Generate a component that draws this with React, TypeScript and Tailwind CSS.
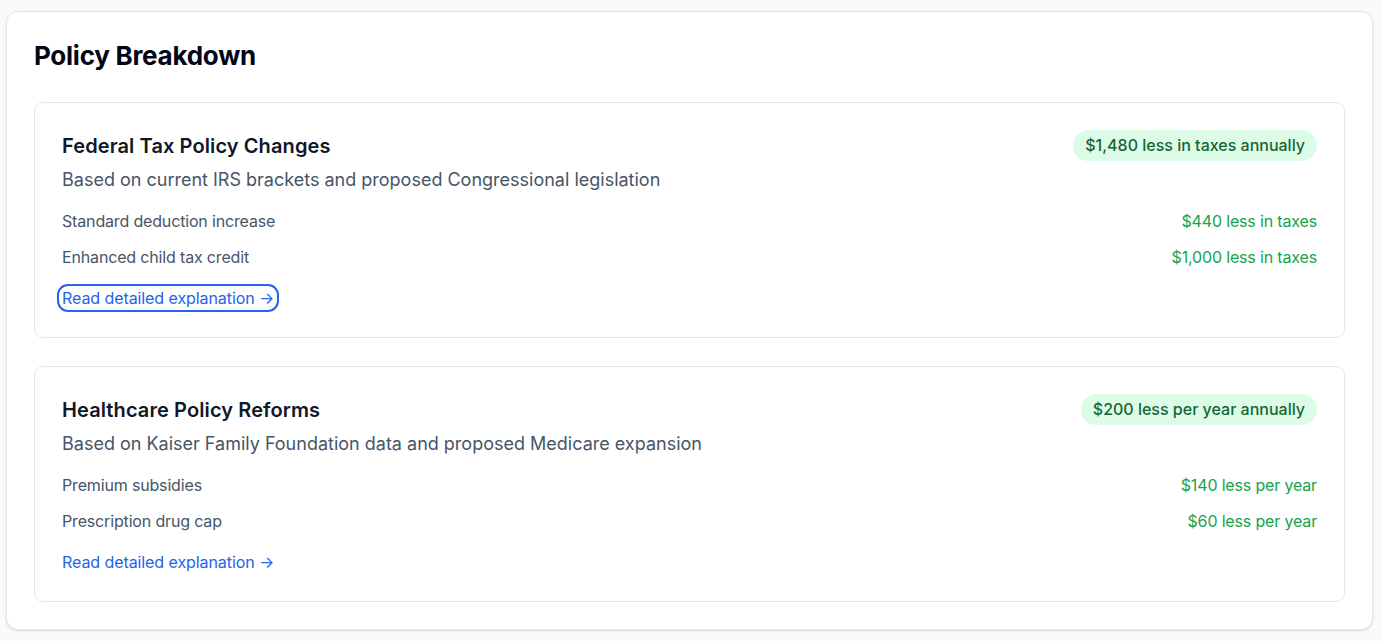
type Item = { label: string; value: string };

type Policy = {
  title: string;
  badge: string;
  source: string;
  items: Item[];
  focused?: boolean;
};

const policies: Policy[] = [
  {
    title: "Federal Tax Policy Changes",
    badge: "$1,480 less in taxes annually",
    source: "Based on current IRS brackets and proposed Congressional legislation",
    items: [
      { label: "Standard deduction increase", value: "$440 less in taxes" },
      { label: "Enhanced child tax credit", value: "$1,000 less in taxes" },
    ],
    focused: true,
  },
  {
    title: "Healthcare Policy Reforms",
    badge: "$200 less per year annually",
    source: "Based on Kaiser Family Foundation data and proposed Medicare expansion",
    items: [
      { label: "Premium subsidies", value: "$140 less per year" },
      { label: "Prescription drug cap", value: "$60 less per year" },
    ],
  },
];

const PolicyCard = ({ policy }: { policy: Policy }) => (
  <div className="rounded-[9px] border border-[#e2e8f0] bg-white p-[27px]">
    <div className="flex items-center justify-between">
      <h3 className="text-xl font-semibold leading-7 tracking-[0.005em] text-[#0f172a]">{policy.title}</h3>
      <span className="rounded-full bg-[#dcfce7] px-3 py-[4px] text-base leading-[23px] font-medium text-[#166534]">
        {policy.badge}
      </span>
    </div>
    <p className="mt-[5px] text-lg leading-7 text-[#475569]">{policy.source}</p>

    <div className="mt-[15px] flex flex-col gap-3">
      {policy.items.map((item) => (
        <div key={item.label} className="flex items-center justify-between text-base leading-6 tracking-[-0.01em]">
          <span className="text-[#475569]">{item.label}</span>
          <span className="text-[#16a34a]">{item.value}</span>
        </div>
      ))}
    </div>

    <div className="mt-[17px] flex">
      <a
        href="#"
        className={
          policy.focused
            ? "-mx-[3px] rounded-[9px] px-[3px] text-base leading-6 tracking-[-0.005em] text-[#2563eb] outline-2 outline-[#2563eb]"
            : "text-base leading-6 tracking-[-0.005em] text-[#2563eb]"
        }
      >
        Read detailed explanation →
      </a>
    </div>
  </div>
);

export default function App() {
  return (
    <div className="min-h-screen bg-[#f8fafc] pb-[11px] pl-[6px] pr-[10px] pt-[11px] font-['Inter',sans-serif]">
      <section className="rounded-xl border border-[#e2e8f0] bg-white px-[27px] pb-[27px] pt-[28px] shadow-sm">
        <h2 className="mb-[30px] text-[26px] font-bold leading-8 tracking-[-0.01em] text-[#020617]">
          Policy Breakdown
        </h2>
        <div className="flex flex-col gap-[28px]">
          {policies.map((p) => (
            <PolicyCard key={p.title} policy={p} />
          ))}
        </div>
      </section>
    </div>
  );
}
